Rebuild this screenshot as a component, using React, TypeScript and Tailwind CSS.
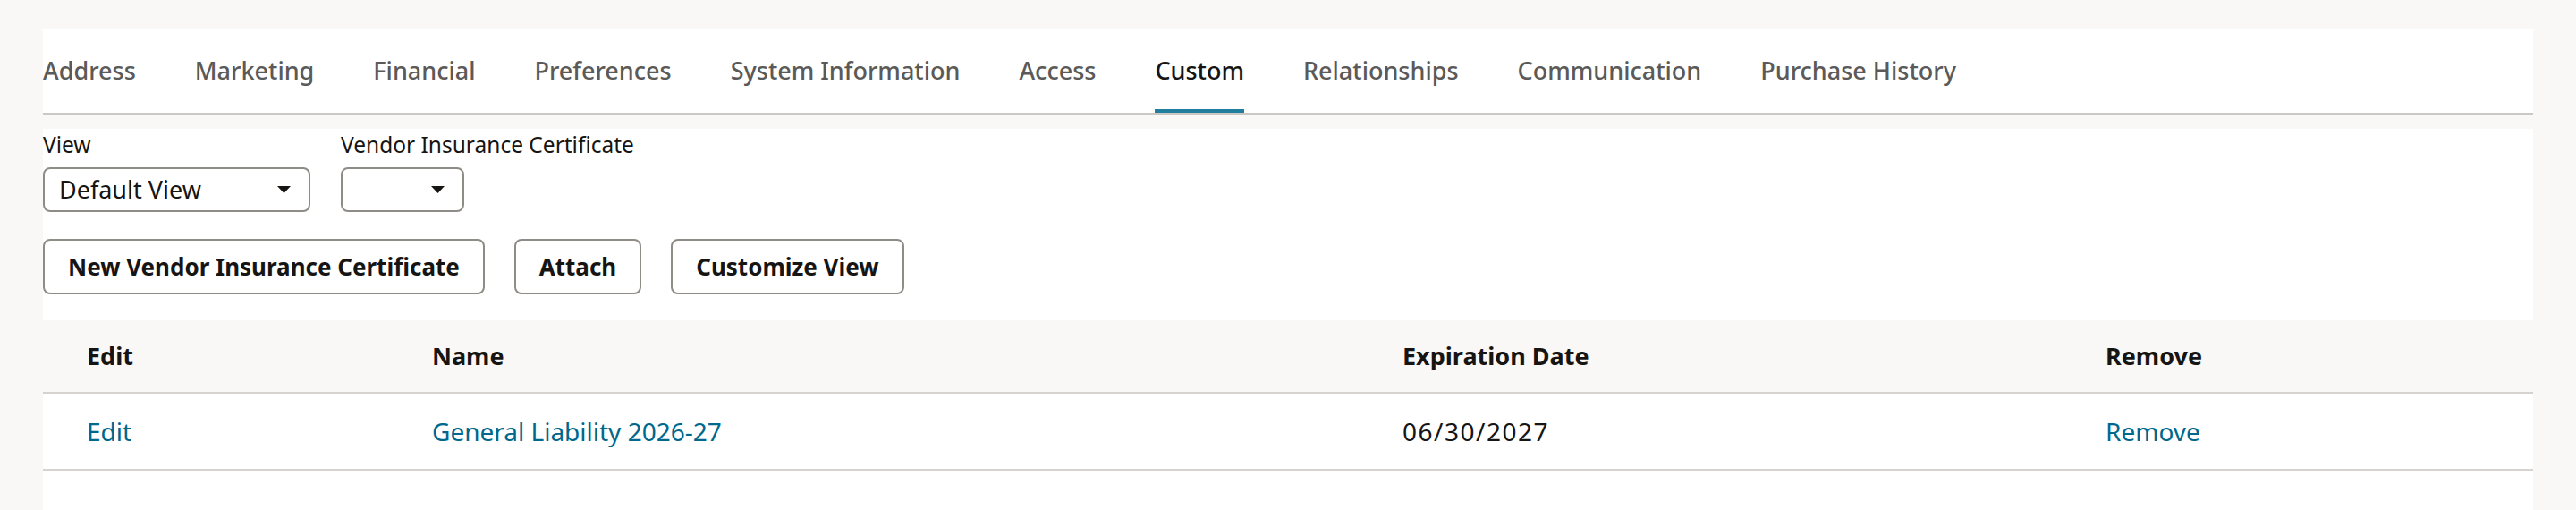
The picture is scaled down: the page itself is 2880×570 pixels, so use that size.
import React from 'react';

const tabs = [
  'Address',
  'Marketing',
  'Financial',
  'Preferences',
  'System Information',
  'Access',
  'Custom',
  'Relationships',
  'Communication',
  'Purchase History',
];

function Caret() {
  return (
    <svg width="15" height="8" viewBox="0 0 15 8" className="shrink-0">
      <path d="M0 0 H15 L7.5 8 Z" fill="#161513" />
    </svg>
  );
}

function Select({ value, width }: { value: string; width: string }) {
  return (
    <div
      className={`flex h-[50px] items-center justify-between rounded-[8px] border-2 border-[#8f8b86] bg-white pl-[16px] pr-[20px] text-[27px] text-[#161513] ${width}`}
    >
      <span>{value}</span>
      <Caret />
    </div>
  );
}

function Button({ children }: { children: React.ReactNode }) {
  return (
    <button className="h-[62px] rounded-[8px] border-2 border-[#8f8b86] bg-white px-[26px] text-[26px] font-bold text-[#161513]">
      {children}
    </button>
  );
}

export default function App() {
  const active = 'Custom';

  return (
    <div
      className="min-h-[570px] bg-[#f9f8f6] px-[48px] pt-[32px]"
      style={{ fontFamily: '"Noto Sans", "Open Sans", sans-serif' }}
    >
      {/* Tabs */}
      <div className="flex h-[96px] gap-[66px] border-b-2 border-[#cbc7c2] bg-white">
        {tabs.map((tab) => (
          <div
            key={tab}
            className={`flex items-center border-b-4 pt-[2px] text-[27px] font-medium leading-none ${
              tab === active
                ? 'border-[#227e9e] text-[#161513]'
                : 'border-transparent text-[#5b5a58]'
            }`}
          >
            {tab}
          </div>
        ))}
      </div>

      <div className="mt-[16px] bg-white">
        {/* Filters */}
        <div className="flex gap-[34px] pt-[2px]">
          <div>
            <div className="mb-[9px] text-[24.5px] leading-[32px] text-[#161513]">View</div>
            <Select value="Default View" width="w-[299px]" />
          </div>
          <div>
            <div className="mb-[9px] text-[24.5px] leading-[32px] text-[#161513]">
              Vendor Insurance Certificate
            </div>
            <Select value="" width="w-[138px]" />
          </div>
        </div>

        {/* Actions */}
        <div className="flex gap-[33px] pb-[29px] pt-[30px]">
          <Button>New Vendor Insurance Certificate</Button>
          <Button>Attach</Button>
          <Button>Customize View</Button>
        </div>

        {/* Table */}
        <div className="grid grid-cols-[387px_1085px_786px_1fr]">
          <div className="flex h-[82px] items-center border-b-2 border-[#d6d2cd] bg-[#f9f8f6] pl-[49px] text-[27px] font-bold text-[#161513]">
            Edit
          </div>
          <div className="flex h-[82px] items-center border-b-2 border-[#d6d2cd] bg-[#f9f8f6] pl-[48px] text-[27px] font-bold text-[#161513]">
            Name
          </div>
          <div className="flex h-[82px] items-center border-b-2 border-[#d6d2cd] bg-[#f9f8f6] pl-[48px] text-[27px] font-bold text-[#161513]">
            Expiration Date
          </div>
          <div className="flex h-[82px] items-center border-b-2 border-[#d6d2cd] bg-[#f9f8f6] pl-[48px] text-[27px] font-bold text-[#161513]">
            Remove
          </div>

          <div className="flex h-[86px] items-center border-b-2 border-[#d6d2cd] pl-[49px] text-[28px] text-[#00688c]">
            Edit
          </div>
          <div className="flex h-[86px] items-center border-b-2 border-[#d6d2cd] pl-[48px] text-[28px] text-[#00688c]">
            General Liability 2026-27
          </div>
          <div className="flex h-[86px] items-center border-b-2 border-[#d6d2cd] pl-[48px] text-[28px] tracking-[1.5px] text-[#161513]">
            06/30/2027
          </div>
          <div className="flex h-[86px] items-center border-b-2 border-[#d6d2cd] pl-[48px] text-[28px] text-[#00688c]">
            Remove
          </div>
        </div>
        <div className="h-[46px]" />
      </div>
    </div>
  );
}
